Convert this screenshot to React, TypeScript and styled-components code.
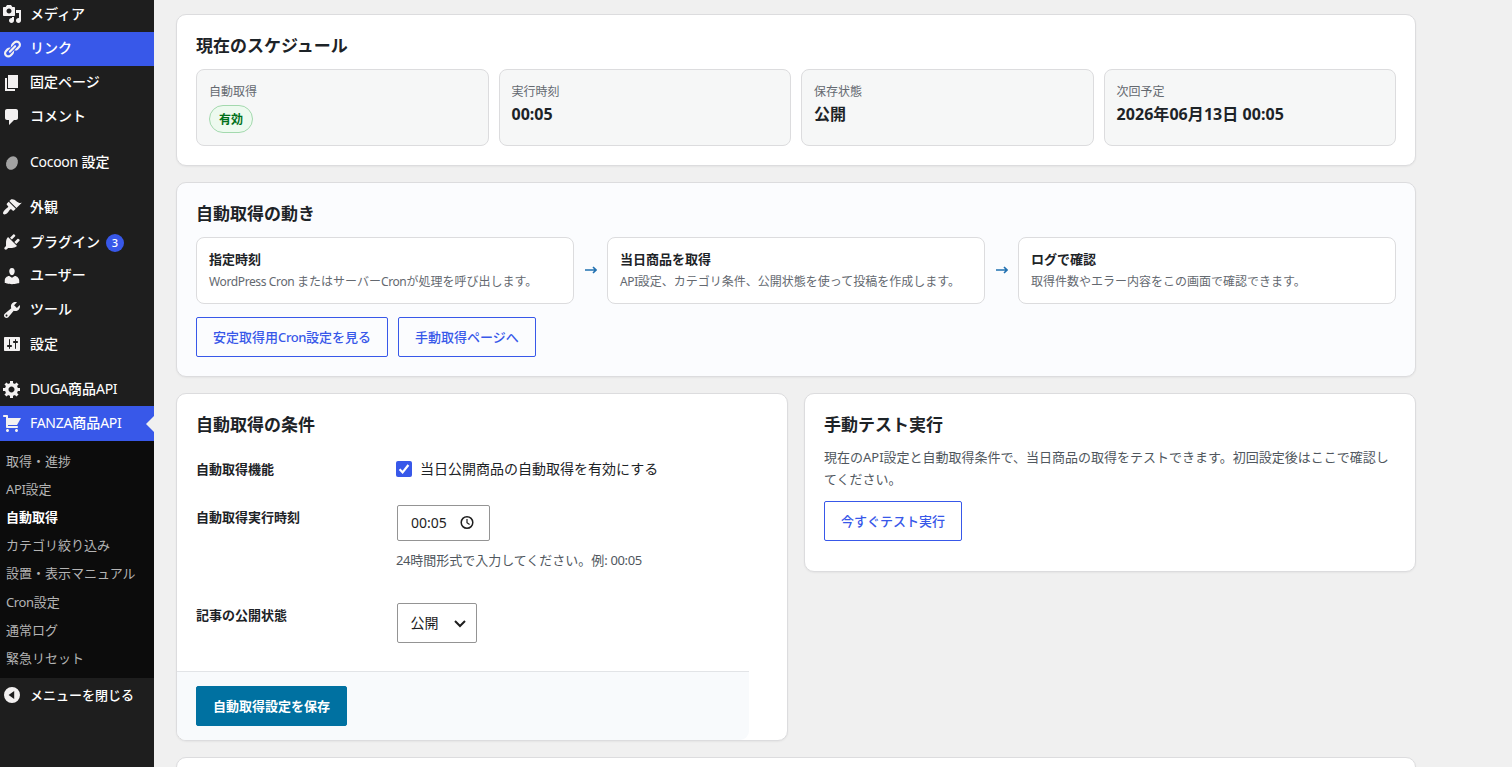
import React from "react";
import styled, { createGlobalStyle, css } from "styled-components";

const GlobalStyle = createGlobalStyle`
  *, *::before, *::after { box-sizing: border-box; }
  body {
    margin: 0;
    background: #f0f0f0;
    color: #1d2327;
    font-family: "Noto Sans", "Noto Sans CJK JP", sans-serif;
    font-size: 13px;
    overflow: hidden;
  }
  h2, p { margin: 0; }
`;

const Page = styled.div`
  display: flex;
  height: 767px;
  overflow: hidden;
`;

/* Latin runs are set slightly tighter than the surrounding Japanese text. */
const Latin = styled.span<{ $track?: number; $regular?: boolean }>`
  letter-spacing: ${(p) => p.$track ?? -0.38}px;
  ${(p) => p.$regular && "font-weight: 400;"}
`;

/* ---------- Sidebar ---------- */

const Sidebar = styled.nav`
  flex: none;
  width: 154px;
  height: 767px;
  background: #1e1e1e;
  overflow: hidden;
`;

const MenuGroup = styled.div<{ $first?: boolean }>`
  margin-top: ${(p) => (p.$first ? "-2px" : "11px")};
`;

const MenuRow = styled.a<{ $active?: boolean; $height?: number; $small?: boolean }>`
  position: relative;
  display: flex;
  align-items: center;
  height: ${(p) => p.$height ?? 34}px;
  padding-left: 2px;
  gap: 8px;
  color: #fff;
  background: ${(p) => (p.$active ? "#3858e9" : "transparent")};
  font-size: ${(p) => (p.$small ? 13 : 14)}px;
  line-height: 18px;
  font-weight: 500;
  white-space: nowrap;
`;

const MenuLabel = styled.span<{ $lift?: number }>`
  padding-bottom: ${(p) => Math.max(0, (p.$lift ?? 0) * 2)}px;
  padding-top: ${(p) => Math.max(0, (p.$lift ?? 0) * -2)}px;
`;

const MenuIcon = styled.svg<{ $lift?: number }>`
  flex: none;
  width: 20px;
  height: 20px;
  margin-bottom: ${(p) => (p.$lift ?? 0) * 2}px;
  fill: #f3f1f1;
`;

const CurrentPointer = styled.span`
  position: absolute;
  right: 0;
  top: 10px;
  border: 8px solid transparent;
  border-left: 0;
  border-right-color: #f0f0f0;
`;

const CountBadge = styled.span`
  display: flex;
  align-items: center;
  justify-content: center;
  width: 18px;
  height: 18px;
  margin: 2px 0 0 -2px;
  border-radius: 9px;
  background: #3858e9;
  font-size: 11px;
  line-height: 18px;
`;

const Submenu = styled.div`
  height: 237px;
  padding: 5.85px 0 0 6px;
  background: #0c0c0c;
`;

const SubmenuItem = styled.a<{ $current?: boolean }>`
  display: block;
  height: 28.15px;
  font-size: 13px;
  line-height: 28px;
  white-space: nowrap;
  color: ${(p) => (p.$current ? "#fff" : "#b4b4b4")};
  font-weight: ${(p) => (p.$current ? 700 : 400)};
`;

/* ---------- Main area ---------- */

const Main = styled.main`
  display: flex;
  flex-direction: column;
  gap: 16px;
  width: 1240px;
  margin: 14px 0 0 22px;
`;

const Card = styled.section<{ $tinted?: boolean; $height: number }>`
  flex: none;
  height: ${(p) => p.$height}px;
  padding: 19px;
  border: 1px solid #dcdcde;
  border-radius: 10px;
  background: ${(p) => (p.$tinted ? "#fbfcfe" : "#fff")};
  box-shadow: 0 1px 2px rgba(0, 0, 0, 0.05);
`;

const CardTitle = styled.h2`
  height: 23px;
  margin-bottom: 12px;
  font-size: 17px;
  line-height: 23px;
  font-weight: 700;
`;

const StatGrid = styled.div`
  display: grid;
  grid-template-columns: repeat(4, 1fr);
  gap: 10px;
`;

const Stat = styled.div`
  height: 77px;
  padding: 12px;
  border: 1px solid #dcdcde;
  border-radius: 8px;
  background: #f6f7f7;
`;

const StatLabel = styled.div`
  height: 18px;
  margin-bottom: 5px;
  font-size: 12px;
  line-height: 20px;
  color: #646970;
`;

const StatValue = styled.div`
  font-size: 16px;
  line-height: 18px;
  font-weight: 700;
`;

const StatusPill = styled.span`
  display: block;
  width: 44px;
  height: 28px;
  border: 1px solid #a3d9ae;
  border-radius: 14px;
  background: #edfaef;
  color: #00701a;
  font-size: 12px;
  line-height: 27px;
  font-weight: 700;
  text-align: center;
`;

const Flow = styled.div`
  display: grid;
  grid-template-columns: 1fr 33px 1fr 33px 1fr;
  align-items: center;
  margin-bottom: 13px;
`;

const Step = styled.div`
  height: 67px;
  padding: 12px;
  border: 1px solid #dcdcde;
  border-radius: 8px;
  background: #fff;
`;

const StepTitle = styled.div`
  height: 18px;
  margin-bottom: 4px;
  font-size: 13px;
  line-height: 18px;
  font-weight: 700;
`;

const StepText = styled.div`
  font-size: 12px;
  line-height: 19px;
  color: #646970;
`;

const FlowArrow = styled.svg`
  justify-self: center;
  width: 12px;
  height: 8px;
  margin-bottom: 1px;
  fill: none;
  stroke: #2271b1;
  stroke-width: 1.6;
`;

const ButtonRow = styled.div`
  display: flex;
  gap: 10px;
`;

const buttonShape = css`
  height: 40px;
  padding: 0 16px;
  border-radius: 2px;
  font-family: inherit;
  font-size: 13px;
  line-height: 38px;
  white-space: nowrap;
`;

const OutlineButton = styled.button`
  ${buttonShape}
  border: 1px solid #3858e9;
  background: transparent;
  color: #3858e9;
  font-weight: 500;
`;

const PrimaryButton = styled.button`
  ${buttonShape}
  border: 1px solid #0071a1;
  background: #0071a1;
  color: #fff;
  font-weight: 700;
`;

const Columns = styled.div`
  display: grid;
  grid-template-columns: 1fr 1fr;
  gap: 16px;
  align-items: start;
`;

const FormRows = styled.div`
  margin-top: -2px;
`;

const FormRow = styled.div<{ $height: number }>`
  display: grid;
  grid-template-columns: 200px 1fr;
  height: ${(p) => p.$height}px;
`;

const FieldLabel = styled.div`
  padding-top: 14px;
  font-size: 13px;
  line-height: 18px;
  font-weight: 700;
`;

const Field = styled.div`
  padding-top: 11px;
`;

const CheckLabel = styled.label`
  display: flex;
  align-items: center;
  gap: 8px;
  padding-top: 4px;
  font-size: 14px;
  line-height: 16px;
`;

const CheckBox = styled.svg`
  flex: none;
  width: 16px;
  height: 16px;
`;

const InputBox = styled.div<{ $width: number; $height: number; $inset: number }>`
  display: flex;
  align-items: center;
  width: ${(p) => p.$width}px;
  height: ${(p) => p.$height}px;
  margin-left: 1px;
  padding-left: ${(p) => p.$inset}px;
  border: 1px solid #949494;
  border-radius: 2px;
  background: #fff;
  color: #1e1e1e;
  font-size: 14px;
`;

const InputText = styled.span`
  padding-bottom: 2px;
`;

const ControlIcon = styled.svg<{ $gap: number }>`
  width: 16px;
  height: 16px;
  margin-left: ${(p) => p.$gap}px;
  fill: none;
  stroke: #1e1e1e;
`;

const Help = styled.p`
  margin-top: 9px;
  font-size: 13px;
  line-height: 20px;
  color: #50575e;
`;

const SubmitBar = styled.div`
  width: 572px;
  height: 69px;
  margin-left: -19px;
  padding: 14px 19px;
  border-top: 1px solid #e2e4e7;
  border-radius: 0 0 9px 9px;
  background: #f8fafc;
`;

const Description = styled.p`
  margin: -2px 0 11px;
  font-size: 13px;
  line-height: 22px;
  color: #50575e;
`;

const icons = {
  media:
    "M13 11V4c0-.55-.45-1-1-1h-1.67L9 1H5L3.67 3H2c-.55 0-1 .45-1 1v7c0 .55.45 1 1 1h10c.55 0 1-.45 1-1zM7 4.5c1.38 0 2.5 1.12 2.5 2.5S8.38 9.5 7 9.5 4.5 8.38 4.5 7 5.62 4.5 7 4.5zM14 6h5v10.5c0 1.38-1.12 2.5-2.5 2.5S14 17.88 14 16.5s1.12-2.5 2.5-2.5c.17 0 .34.02.5.05V9h-3V6zm-4 8.05V13h2v3.5c0 1.38-1.12 2.5-2.5 2.5S7 17.88 7 16.5 8.12 14 9.5 14c.17 0 .34.02.5.05z",
  links:
    "M17.74 2.76c1.68 1.69 1.68 4.41 0 6.1l-1.53 1.52c-1.12 1.12-2.7 1.47-4.14 1.09l2.62-2.61.76-.77.76-.76c.84-.84.84-2.2 0-3.04-.84-.85-2.2-.85-3.04 0l-.77.76-3.38 3.38c-.37-1.44-.02-3.02 1.1-4.14l1.52-1.53c1.69-1.68 4.42-1.68 6.1 0zM8.59 13.43l5.34-5.34c.42-.42.42-1.1 0-1.52-.44-.43-1.13-.39-1.53 0l-5.33 5.34c-.42.42-.42 1.1 0 1.52.44.43 1.13.39 1.52 0zm-.76 2.29l4.14-4.15c.38 1.44.03 3.02-1.09 4.14l-1.52 1.53c-1.69 1.68-4.41 1.68-6.1 0-1.68-1.68-1.68-4.42 0-6.1l1.53-1.52c1.12-1.12 2.7-1.47 4.14-1.1l-4.14 4.15c-.85.84-.85 2.2 0 3.05.84.84 2.2.84 3.04 0z",
  page: "M6 15V2h10v13H6zm-1 1h8v2H3V5h2v11z",
  comments:
    "M5 2h9c1.1 0 2 .9 2 2v7c0 1.1-.9 2-2 2h-2l-5 5v-5H5c-1.1 0-2-.9-2-2V4c0-1.1.9-2 2-2z",
  appearance:
    "M14.48 11.06L7.41 3.99l1.5-1.5c.5-.56 2.3-.47 3.51.32 1.21.8 1.43 1.28 2.91 2.1 1.18.64 2.45 1.26 4.45.85zm-.71.71L6.7 4.7 4.93 6.47c-.39.39-.39 1.02 0 1.41l1.06 1.06c.39.39.39 1.03 0 1.42-.6.6-1.43 1.11-2.21 1.69-.35.26-.7.53-1.01.84C1.43 14.23.4 16.08 1.4 17.07c.99 1 2.84-.03 4.18-1.36.31-.31.58-.66.85-1.02.57-.78 1.08-1.61 1.69-2.21.39-.39 1.02-.39 1.41 0l1.06 1.06c.39.39 1.02.39 1.41 0z",
  plugins:
    "M13.11 4.36L9.87 7.6 8 5.73l3.24-3.24c.35-.34 1.05-.2 1.56.32.52.51.66 1.21.31 1.55zm-8 1.77l.91-1.12 9.01 9.01-1.19.84c-.71.71-2.63 1.16-3.82 1.16H6.14L4.9 17.26c-.59.59-1.54.59-2.12 0-.59-.58-.59-1.53 0-2.12l1.24-1.24v-3.88c0-1.13.4-3.19 1.09-3.89zm7.26 3.97l3.24-3.24c.34-.35 1.04-.21 1.55.31.52.51.66 1.21.31 1.55l-3.24 3.25z",
  users:
    "M10 9.25c-2.27 0-2.73-3.44-2.73-3.44C7 4.02 7.82 2 9.97 2c2.16 0 2.98 2.02 2.71 3.81 0 0-.41 3.44-2.68 3.44zm0 2.57L12.72 10c2.39 0 4.52 2.33 4.52 4.53v2.49s-3.65 1.13-7.24 1.13c-3.65 0-7.24-1.13-7.24-1.13v-2.49c0-2.25 1.94-4.48 4.47-4.48z",
  tools:
    "M16.68 9.77c-1.34 1.34-3.3 1.67-4.95.99l-5.41 6.52c-.99.99-2.59.99-3.58 0s-.99-2.59 0-3.57l6.52-5.42c-.68-1.65-.35-3.61.99-4.95 1.28-1.28 3.12-1.62 4.72-1.06l-2.89 2.89 2.82 2.82 2.86-2.87c.53 1.58.18 3.39-1.08 4.65zM3.81 16.21c.4.39 1.04.39 1.43 0 .4-.4.4-1.04 0-1.43-.39-.4-1.03-.4-1.43 0-.39.39-.39 1.03 0 1.43z",
  settings:
    "M18 16V4c0-.55-.45-1-1-1H3c-.55 0-1 .45-1 1v12c0 .55.45 1 1 1h14c.55 0 1-.45 1-1zM8 11h1c.55 0 1 .45 1 1s-.45 1-1 1H8v1.5c0 .28-.22.5-.5.5s-.5-.22-.5-.5V13H6c-.55 0-1-.45-1-1s.45-1 1-1h1V5.5c0-.28.22-.5.5-.5s.5.22.5.5V11zm5-2h-1c-.55 0-1-.45-1-1s.45-1 1-1h1V5.5c0-.28.22-.5.5-.5s.5.22.5.5V7h1c.55 0 1 .45 1 1s-.45 1-1 1h-1v5.5c0 .28-.22.5-.5.5s-.5-.22-.5-.5V9z",
  generic:
    "M18 12h-2.18c-.17.7-.44 1.35-.81 1.93l1.54 1.54-2.1 2.1-1.54-1.54c-.58.36-1.23.63-1.91.79V19H8v-2.18c-.68-.16-1.33-.43-1.91-.79l-1.54 1.54-2.12-2.12 1.54-1.54c-.36-.58-.63-1.23-.79-1.91H1V9.03h2.17c.16-.7.44-1.35.8-1.94L2.43 5.55l2.1-2.1 1.54 1.54c.58-.37 1.24-.64 1.93-.81V2h3v2.18c.68.16 1.33.43 1.91.79l1.54-1.54 2.12 2.12-1.54 1.54c.36.59.64 1.24.8 1.94H18V12zm-8.5 1.5c1.66 0 3-1.34 3-3s-1.34-3-3-3-3 1.34-3 3 1.34 3 3 3z",
  cart: "M6 13h9c.55 0 1 .45 1 1s-.45 1-1 1H5c-.55 0-1-.45-1-1V4H2c-.55 0-1-.45-1-1s.45-1 1-1h3c.55 0 1 .45 1 1v2h13l-4 7H6v1zm-.5 3c.83 0 1.5.67 1.5 1.5S6.33 19 5.5 19 4 18.33 4 17.5 4.67 16 5.5 16zm9 0c.83 0 1.5.67 1.5 1.5s-.67 1.5-1.5 1.5-1.5-.67-1.5-1.5.67-1.5 1.5-1.5z",
  collapse: "M10 2a8 8 0 1 0 0 16 8 8 0 0 0 0-16zm2.2 4v8L6.6 10z",
};

type IconName = keyof typeof icons;

const Icon = ({ name, lift }: { name: IconName; lift?: number }) => (
  <MenuIcon $lift={lift} viewBox="0 0 20 20" aria-hidden>
    <path d={icons[name]} fillRule="evenodd" />
  </MenuIcon>
);

const submenu: { latin?: string; label: string }[] = [
  { label: "取得・進捗" },
  { latin: "API", label: "設定" },
  { label: "自動取得" },
  { label: "カテゴリ絞り込み" },
  { label: "設置・表示マニュアル" },
  { latin: "Cron", label: "設定" },
  { label: "通常ログ" },
  { label: "緊急リセット" },
];

const AdminMenu = () => (
  <Sidebar>
    <MenuGroup $first>
      <MenuRow><Icon name="media" lift={1} /><MenuLabel $lift={1}>メディア</MenuLabel></MenuRow>
      <MenuRow $active><Icon name="links" /><MenuLabel $lift={1}>リンク</MenuLabel></MenuRow>
      <MenuRow><Icon name="page" /><MenuLabel $lift={1}>固定ページ</MenuLabel></MenuRow>
      <MenuRow><Icon name="comments" /><MenuLabel $lift={1}>コメント</MenuLabel></MenuRow>
    </MenuGroup>
    <MenuGroup>
      <MenuRow>
        <MenuIcon viewBox="0 0 20 20" aria-hidden>
          <ellipse cx="10" cy="11" rx="5.6" ry="7" fill="#a3a3a3" transform="rotate(28 10 11)" />
        </MenuIcon>
        <MenuLabel><Latin $regular $track={-0.3}>Cocoon</Latin> 設定</MenuLabel>
      </MenuRow>
    </MenuGroup>
    <MenuGroup>
      <MenuRow><Icon name="appearance" /><MenuLabel>外観</MenuLabel></MenuRow>
      <MenuRow $height={35}><Icon name="plugins" /><MenuLabel>プラグイン</MenuLabel><CountBadge>3</CountBadge></MenuRow>
      <MenuRow><Icon name="users" /><MenuLabel $lift={1}>ユーザー</MenuLabel></MenuRow>
      <MenuRow><Icon name="tools" /><MenuLabel $lift={1}>ツール</MenuLabel></MenuRow>
      <MenuRow><Icon name="settings" /><MenuLabel>設定</MenuLabel></MenuRow>
    </MenuGroup>
    <MenuGroup>
      <MenuRow>
        <Icon name="generic" />
        <MenuLabel><Latin $regular>DUGA</Latin>商品<Latin $regular>API</Latin></MenuLabel>
      </MenuRow>
      <MenuRow $active $height={35}>
        <Icon name="cart" lift={0.5} />
        <MenuLabel $lift={1}><Latin $regular $track={-0.28}>FANZA</Latin>商品<Latin $regular $track={-0.28}>API</Latin></MenuLabel>
        <CurrentPointer />
      </MenuRow>
    </MenuGroup>
    <Submenu>
      {submenu.map(({ latin, label }) => (
        <SubmenuItem key={label + latin} $current={label === "自動取得"}>
          {latin && <Latin>{latin}</Latin>}
          {label}
        </SubmenuItem>
      ))}
    </Submenu>
    <MenuRow $small><Icon name="collapse" /><MenuLabel>メニューを閉じる</MenuLabel></MenuRow>
  </Sidebar>
);

const Arrow = () => (
  <FlowArrow viewBox="0 0 12 8" aria-hidden>
    <path d="M0 4h11M8 1l3 3-3 3" />
  </FlowArrow>
);

export default function App() {
  return (
    <>
      <GlobalStyle />
      <Page>
        <AdminMenu />
        <Main>
          <Card $height={152}>
            <CardTitle>現在のスケジュール</CardTitle>
            <StatGrid>
              <Stat>
                <StatLabel>自動取得</StatLabel>
                <StatusPill>有効</StatusPill>
              </Stat>
              <Stat>
                <StatLabel>実行時刻</StatLabel>
                <StatValue>00:05</StatValue>
              </Stat>
              <Stat>
                <StatLabel>保存状態</StatLabel>
                <StatValue>公開</StatValue>
              </Stat>
              <Stat>
                <StatLabel>次回予定</StatLabel>
                <StatValue><Latin $track={0.06}>2026年06月13日 00:05</Latin></StatValue>
              </Stat>
            </StatGrid>
          </Card>

          <Card $tinted $height={195}>
            <CardTitle>自動取得の動き</CardTitle>
            <Flow>
              <Step>
                <StepTitle>指定時刻</StepTitle>
                <StepText>
                  <Latin>WordPress Cron </Latin>またはサーバー<Latin>Cron</Latin>が処理を呼び出します。
                </StepText>
              </Step>
              <Arrow />
              <Step>
                <StepTitle>当日商品を取得</StepTitle>
                <StepText><Latin>API</Latin>設定、カテゴリ条件、公開状態を使って投稿を作成します。</StepText>
              </Step>
              <Arrow />
              <Step>
                <StepTitle>ログで確認</StepTitle>
                <StepText>取得件数やエラー内容をこの画面で確認できます。</StepText>
              </Step>
            </Flow>
            <ButtonRow>
              <OutlineButton>安定取得用<Latin>Cron</Latin>設定を見る</OutlineButton>
              <OutlineButton>手動取得ページへ</OutlineButton>
            </ButtonRow>
          </Card>

          <Columns>
            <Card $height={348}>
              <CardTitle>自動取得の条件</CardTitle>
              <FormRows>
                <FormRow $height={48}>
                  <FieldLabel>自動取得機能</FieldLabel>
                  <Field>
                    <CheckLabel>
                      <CheckBox viewBox="0 0 16 16">
                        <rect width="16" height="16" rx="2" fill="#3858e9" />
                        <path d="M3.6 8.2l3 3.2 5.8-7.4" fill="none" stroke="#fff" strokeWidth="2.2" />
                      </CheckBox>
                      当日公開商品の自動取得を有効にする
                    </CheckLabel>
                  </Field>
                </FormRow>
                <FormRow $height={98}>
                  <FieldLabel>自動取得実行時刻</FieldLabel>
                  <Field>
                    <InputBox $width={93} $height={36} $inset={13}>
                      <InputText>00:05</InputText>
                      <ControlIcon $gap={12} viewBox="0 0 16 16" strokeWidth="1.5">
                        <circle cx="8" cy="7.5" r="5.8" />
                        <path d="M8 4v3.8l2.6 1.7" strokeWidth="1.2" />
                      </ControlIcon>
                    </InputBox>
                    <Help><Latin>24</Latin>時間形式で入力してください。例<Latin>: 00:05</Latin></Help>
                  </Field>
                </FormRow>
                <FormRow $height={79}>
                  <FieldLabel>記事の公開状態</FieldLabel>
                  <Field>
                    <InputBox $width={80} $height={40} $inset={12.5}>
                      <InputText>公開</InputText>
                      <ControlIcon $gap={13.5} viewBox="0 0 16 16" strokeWidth="2">
                        <path d="M3 6l5 5 5-5" />
                      </ControlIcon>
                    </InputBox>
                  </Field>
                </FormRow>
              </FormRows>
              <SubmitBar>
                <PrimaryButton>自動取得設定を保存</PrimaryButton>
              </SubmitBar>
            </Card>

            <Card $height={179}>
              <CardTitle>手動テスト実行</CardTitle>
              <Description>
                現在のAPI設定と自動取得条件で、当日商品の取得をテストできます。初回設定後はここで確認してください。
              </Description>
              <OutlineButton>今すぐテスト実行</OutlineButton>
            </Card>
          </Columns>

          <Card $height={120} />
        </Main>
      </Page>
    </>
  );
}
